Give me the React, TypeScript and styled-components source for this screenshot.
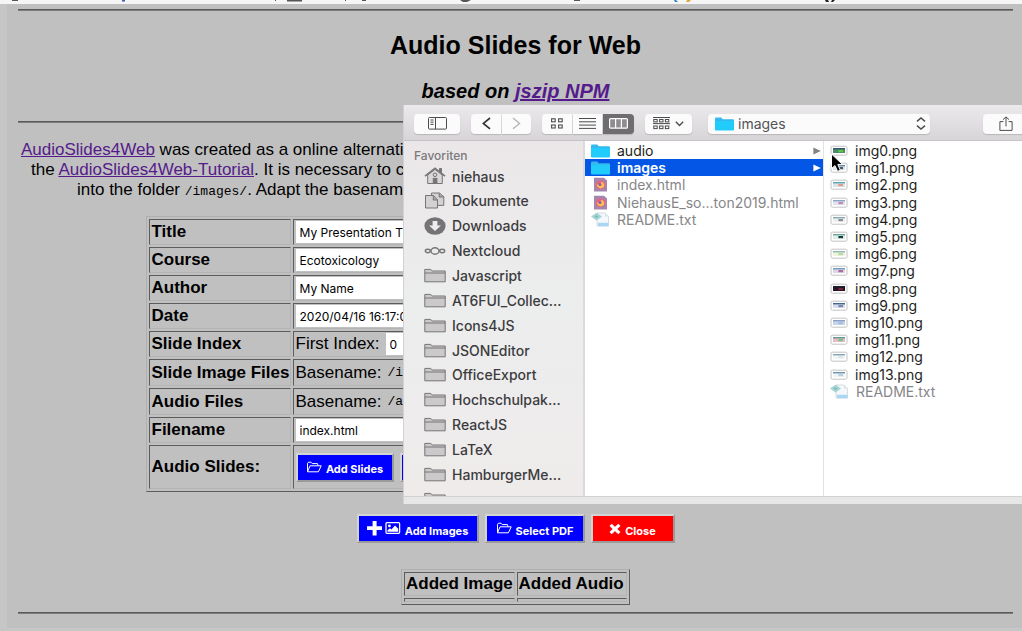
import React from 'react';
import styled, { createGlobalStyle, css } from 'styled-components';

const GlobalStyle = createGlobalStyle`
  * { box-sizing: border-box; }
  html, body { margin: 0; background: #c6c6c6; }
  body { font-family: "Liberation Sans", Arial, sans-serif; font-size: 17px; color: #000; }
  button, input, select { font: inherit; color: inherit; margin: 0; }
`;

const ui = 'Inter, "Noto Sans", sans-serif';

/* ---------- page ---------- */

const Page = styled.div`
  position: relative;
  overflow: hidden;
`;

const BrowserStrip = styled.div`
  height: 4px;
  background: #f6f6f6;
  svg { display: block; }
`;

const Sheet = styled.main`
  margin-left: 7px;
  padding: 5px 9px 14px 11px;
  background: #c0c0c0;
`;

const Rule = styled.hr<{ $gap?: number }>`
  height: 2px;
  margin: ${(p) => p.$gap ?? 0}px 0 0;
  border: 0;
  border-top: 1px solid #5a5a5a;
  border-bottom: 1px solid #7c7c7c;
`;

const Heading = styled.h1`
  margin: 19px 0 0;
  font-size: 25px;
  line-height: 30px;
  text-align: center;
`;

const SubHeading = styled.h2`
  margin: 19px 0 0;
  font-size: 20px;
  line-height: 24px;
  font-style: italic;
  text-align: center;
`;

const Link = styled.a`
  color: #551a8b;
  text-decoration: underline;
`;

const Intro = styled.p`
  margin: 17px 0 16px;
  line-height: 20px;
  white-space: nowrap;
`;

const IntroLine = styled.span<{ $indent: number }>`
  display: block;
  padding-left: ${(p) => p.$indent}px;
`;

const Code = styled.code`
  font-family: "Liberation Mono", monospace;
  font-size: 13px;
  line-height: 1;
`;

const FormTable = styled.table<{ $wide?: boolean }>`
  width: ${(p) => (p.$wide ? '740px' : '229px')};
  margin: 0 auto;
  border: 1px solid;
  border-color: #b0b0b0 #5c5c5c #5c5c5c #b0b0b0;
  border-spacing: 2px;
  table-layout: fixed;
  text-align: left;
`;

const cell = css`
  padding: 1px 2px;
  border: 1px solid;
  border-color: #5c5c5c #b4b4b4 #b4b4b4 #5c5c5c;
  line-height: 20px;
  white-space: nowrap;
`;

const Row = styled.tr<{ $height: number }>`
  height: ${(p) => p.$height}px;
`;

const LabelCell = styled.th<{ $width?: number }>`
  ${cell}
  width: ${(p) => (p.$width ? `${p.$width}px` : 'auto')};
`;

const HeadCell = styled(LabelCell)`
  padding: 1px;
`;

const ValueCell = styled.td`
  ${cell}
`;

const Blank = styled.td`
  ${cell}
  padding: 0;
`;

const TextInput = styled.input`
  display: block;
  width: 300px;
  height: 22px;
  padding: 0 4px;
  border: 0;
  background: #fff;
  font-family: ${ui};
  font-size: 12px;
`;

const Inline = styled.div`
  display: flex;
  align-items: center;
  gap: 6px;
  height: 22px;
`;

const IndexInput = styled(TextInput)`
  width: 36px;
`;

const Actions = styled.div`
  display: flex;
  justify-content: center;
  gap: 6px;
  margin: 22px 0 26px;
`;

const CellActions = styled.div`
  display: flex;
  gap: 6px;
`;

const ActionButton = styled.button<{ $color: string; $width: number }>`
  display: flex;
  align-items: center;
  justify-content: center;
  gap: 4px;
  width: ${(p) => p.$width}px;
  height: 29px;
  padding: 0;
  border: 2px solid;
  border-color: #d4d4d4 #9a9a9a #9a9a9a #d4d4d4;
  background: ${(p) => p.$color};
  color: #fff;
  font-family: ${ui};
  font-size: 11px;
  font-weight: 700;
  line-height: 16px;
  white-space: nowrap;
  span { padding-top: 4px; }
`;

/* ---------- file dialog ---------- */

const Dialog = styled.section`
  position: absolute;
  top: 105px;
  left: 403px;
  right: 0;
  display: flex;
  flex-direction: column;
  overflow: hidden;
  background: #fff;
  border-left: 1px solid #d2d0d2;
  font-family: ${ui};
  font-size: 14px;
  color: #2c2c2e;
`;

const Toolbar = styled.div`
  display: flex;
  align-items: center;
  gap: 11px;
  height: 36px;
  padding: 2px 0 0 10px;
  background: linear-gradient(#ece9ec, #d8d5d8);
  border-bottom: 1px solid #c6c3c6;
`;

const Group = styled.div`
  display: flex;
  gap: 1px;
  flex: none;
`;

const ToolButton = styled.button<{ $width: number; $side?: 'left' | 'mid' | 'right'; $on?: boolean }>`
  display: flex;
  align-items: center;
  justify-content: center;
  gap: 5px;
  flex: none;
  width: ${(p) => p.$width}px;
  height: 20px;
  padding: 0;
  border: 0;
  border-radius: ${(p) =>
    p.$side === 'left' ? '4px 0 0 4px' : p.$side === 'mid' ? '0' : p.$side === 'right' ? '0 4px 4px 0' : '4px'};
  background: ${(p) => (p.$on ? '#6f6d6f' : '#fcfbfc')};
  box-shadow: 0 1px 1px #b9b6b9;
`;

const PathBox = styled.label`
  display: flex;
  align-items: center;
  gap: 4px;
  flex: none;
  width: 222px;
  height: 20px;
  margin: 0 42px 0 5px;
  padding: 0 4px 0 7px;
  border-radius: 4px;
  background: #fcfbfc;
  box-shadow: 0 1px 1px #b9b6b9;
  color: #545456;
  select {
    flex: 1;
    height: 20px;
    padding: 0;
    border: 0;
    background: transparent;
    appearance: none;
  }
`;

const Columns = styled.div`
  display: flex;
  height: 355px;
`;

const Sidebar = styled.nav`
  flex: none;
  width: 181px;
  overflow: hidden;
  background: linear-gradient(#ebe7e9, #eceded 45%, #efebeb);
  border-right: 2px solid #dcdadb;
`;

const SideTitle = styled.h3`
  margin: 6px 0 0 10px;
  font-size: 12px;
  line-height: 17px;
  font-weight: 500;
  color: #7b797b;
`;

const SideList = styled.ul`
  display: grid;
  grid-auto-rows: 1fr;
  height: 348px;
  margin: 0;
  padding: 0;
  list-style: none;
`;

const SideItem = styled.button`
  display: flex;
  align-items: center;
  gap: 6px;
  width: 100%;
  height: 24px;
  padding: 0 0 0 20px;
  border: 0;
  background: none;
  color: #3c3c3e;
  text-align: left;
  font-weight: 500;
  svg { flex: none; }
`;

const FileColumn = styled.div<{ $width?: number }>`
  flex: ${(p) => (p.$width ? 'none' : 1)};
  width: ${(p) => (p.$width ? `${p.$width}px` : 'auto')};
  padding-top: 1px;
  border-right: ${(p) => (p.$width ? '1px solid #e2e2e2' : '0')};
`;

const FileList = styled.ul<{ $height: number }>`
  display: grid;
  grid-auto-rows: 1fr;
  height: ${(p) => p.$height}px;
  margin: 0;
  padding: 0;
  list-style: none;
`;

const FileRow = styled.button<{ $selected?: boolean }>`
  display: flex;
  align-items: center;
  gap: 7px;
  width: 100%;
  height: 17px;
  padding: 0 2px 0 6px;
  border: 0;
  background: ${(p) => (p.$selected ? '#0457e6' : 'none')};
  color: ${(p) => (p.$selected ? '#fff' : '#1e1e20')};
  font-weight: ${(p) => (p.$selected ? 600 : 400)};
  line-height: 17px;
  text-align: left;
  white-space: nowrap;
  &:disabled { color: #868688; }
  svg { flex: none; }
  span { flex: 1; }
`;

const DialogFoot = styled.div`
  height: 8px;
  background: #e7e7e7;
  border-top: 1px solid #d2d2d2;
`;

const Pointer = styled.svg`
  position: absolute;
  top: 153px;
  left: 830px;
`;

/* ---------- icons ---------- */

const OpenFolder = () => (
  <svg width="16" height="13" viewBox="0 0 16 13" fill="none" stroke="#fff" strokeWidth="1" strokeLinejoin="round">
    <path d="M1.5 10.5V2.3L2.5 1.2H5L6.2 2.6H11.5L12 4.6M1.5 10.8L4 4.8H15.2L12.4 10.8Z" />
  </svg>
);

const PlusPicture = () => (
  <svg width="34" height="15" viewBox="0 0 34 15">
    <path d="M5.6 0H9.6V5.2H15V9H9.6V14.4H5.6V9H0V5.2H5.6Z" fill="#fff" />
    <rect x="19" y="1.7" width="13.6" height="10.6" rx="1" fill="none" stroke="#fff" strokeWidth="1.3" />
    <circle cx="22.4" cy="4.9" r="1.4" fill="#fff" />
    <path d="M20.5 10.8V9.2L23 7.2L24.4 8.4L28 4.6L31.2 7.8V10.8Z" fill="#fff" />
  </svg>
);

const Cross = () => (
  <svg width="12" height="12" viewBox="0 0 12 12" stroke="#fff" strokeWidth="3.2">
    <path d="M1.6 1.8L10.4 10.2M10.4 1.8L1.6 10.2" />
  </svg>
);

const BlueFolder = () => (
  <svg width="19" height="14" viewBox="0 0 19 14">
    <path d="M0 2Q0 .6 1.2 .6H6.3L7.6 2.2H17.8Q19 2.2 19 3.2V13H0Z" fill="#35b8ee" />
    <path d="M0 4H19V12.4Q19 13.4 18 13.4H1Q0 13.4 0 12.4Z" fill="#22ccfa" />
  </svg>
);

const GrayFolder = () => (
  <svg width="22" height="15" viewBox="0 0 22 15" stroke="#777577" strokeWidth="1" fill="#cbc9ca">
    <path d="M.8 13.8V1.4H6.8L8.2 3H21.2V13.8Z" />
    <path d="M.8 5H21.2" fill="none" />
  </svg>
);

const Home = () => (
  <svg width="22" height="18" viewBox="0 0 22 18" fill="none" stroke="#777577">
    <path d="M15.5 1.5H17.5V5.6L15.5 4Z" fill="#777577" />
    <path d="M3.7 8V16.5H18.3V8L11 2.4Z" fill="#d9d7d8" />
    <path d="M1 9.2L11 1.2L21 9.2" strokeWidth="1.6" />
    <circle cx="11" cy="7.8" r="1.8" />
    <rect x="9.3" y="11.4" width="3.6" height="4.6" fill="#777577" />
  </svg>
);

const Documents = () => (
  <svg width="22" height="17" viewBox="0 0 22 17" fill="#d3d1d2" stroke="#777577">
    <path d="M7.5 1H15.5L19.8 4.6V13.4H7.5Z" />
    <path d="M15.2 1V5H19.8" fill="#a9a7a8" />
    <path d="M1.5 3.5H9.5L13.5 7.6V16H1.5Z" />
    <path d="M9.3 3.5V8H13.5" fill="#a9a7a8" />
  </svg>
);

const Download = () => (
  <svg width="22" height="18" viewBox="0 0 22 18">
    <ellipse cx="11" cy="9" rx="10.6" ry="8.8" fill="#757375" />
    <path d="M8.6 4H13.4V8.6H17L11 14L5 8.6H8.6Z" fill="#eeecee" />
  </svg>
);

const Cloud = () => (
  <svg width="22" height="12" viewBox="0 0 22 12" fill="none" stroke="#777577" strokeWidth="1.4">
    <ellipse cx="11" cy="6" rx="4" ry="3.2" />
    <ellipse cx="3.8" cy="6" rx="2.5" ry="1.7" />
    <ellipse cx="18.2" cy="6" rx="2.5" ry="1.7" />
  </svg>
);

const HtmlFile = () => (
  <svg width="19" height="15" viewBox="0 0 19 15">
    <path d="M3 .8H13L16 3.4V14.4H3Z" fill="#a585ae" />
    <ellipse cx="9.6" cy="7.8" rx="4.8" ry="4.2" fill="#e9637d" />
    <path d="M5.8 7C8 9 9 5.5 11 5C14.5 7 14 11 9.6 11.4C7 11 5.8 9 5.8 7Z" fill="#ffc24f" />
    <circle cx="9" cy="7.6" r="1.5" fill="#8c5bb0" />
  </svg>
);

const TextFile = () => (
  <svg width="19" height="15" viewBox="0 0 19 15">
    <path d="M6 1H14L17.5 4.4V14H6Z" fill="#f4f8fa" stroke="#c9d4da" strokeWidth=".8" />
    <path d="M14 1V4.4H17.5" fill="#dbe4e8" />
    <path d="M0 4.6L5.5 .8L11 4.6L5.5 8.6Z" fill="#a5d4d3" />
    <path d="M3.4 4.6L5.5 3.2L7.6 4.6L5.5 6Z" fill="#7fb9c2" />
    <path d="M7 10.8H17.5V14.2H7Z" fill="#a9d6f3" />
  </svg>
);

const Thumb = ({ a, b, bg }: { a: string; b: string; bg: string }) => (
  <svg width="18" height="11" viewBox="0 0 18 11">
    <rect x="1" y="1.2" width="16" height="9" rx="1.4" fill="#fff" stroke="#c3c3c3" strokeWidth="1" />
    <rect x="3" y="3" width="12" height="5" fill={bg} />
    <rect x="3" y="3" width="12" height="1.4" fill={a} />
    <rect x="8.4" y="5" width="4.6" height="2.2" fill={b} />
  </svg>
);

const Triangle = ({ color }: { color: string }) => (
  <svg width="8" height="8" viewBox="0 0 8 8">
    <path d="M.4 .6L7.8 4L.4 7.4Z" fill={color} />
  </svg>
);

/* ---------- data ---------- */

const sideItems: [string, () => React.JSX.Element][] = [
  ['niehaus', Home],
  ['Dokumente', Documents],
  ['Downloads', Download],
  ['Nextcloud', Cloud],
  ['Javascript', GrayFolder],
  ['AT6FUI_Collec...', GrayFolder],
  ['Icons4JS', GrayFolder],
  ['JSONEditor', GrayFolder],
  ['OfficeExport', GrayFolder],
  ['Hochschulpak...', GrayFolder],
  ['ReactJS', GrayFolder],
  ['LaTeX', GrayFolder],
  ['HamburgerMe...', GrayFolder],
  ['', GrayFolder],
];

const thumbs = [
  ['#34586a', '#5cc83c', '#4c8a6c'],
  ['#6d8496', '#43586c', '#dfe4e8'],
  ['#5ba3b5', '#e39a8e', '#d9e4e8'],
  ['#8aa5c6', '#c48bb0', '#dfe3ef'],
  ['#8aaab8', '#8f8f94', '#eeeeee'],
  ['#6aa39c', '#173a4c', '#dff0e2'],
  ['#8db6b0', '#b9d7a8', '#edf3dc'],
  ['#6f9fc0', '#b06a9c', '#dcd5e8'],
  ['#20202c', '#7a2236', '#22182a'],
  ['#44688c', '#7c88b4', '#d5dcea'],
  ['#8aa0c6', '#a9bedf', '#c7d5ec'],
  ['#5d9a9a', '#7fbf8c', '#e5bcc4'],
  ['#7fa6b4', '#d7e6ea', '#f2f6f7'],
  ['#6f92ac', '#b9cfe0', '#eef3f6'],
];

const fields = [
  ['Title', 'My Presentation Title'],
  ['Course', 'Ecotoxicology'],
  ['Author', 'My Name'],
  ['Date', '2020/04/16 16:17:00'],
];

const FieldRow = ({ label, value }: { label: string; value: string }) => (
  <Row $height={26}>
    <LabelCell $width={142} scope="row"><label htmlFor={label}>{label}</label></LabelCell>
    <ValueCell><TextInput id={label} defaultValue={value} /></ValueCell>
  </Row>
);

const FileDialog = () => (
  <Dialog aria-label="images">
    <Toolbar>
      <ToolButton $width={46} aria-label="Sidebar">
        <svg width="19" height="13" viewBox="0 0 19 13" fill="none" stroke="#4c4c4e">
          <rect x=".5" y=".5" width="18" height="11.6" rx="1" />
          <path d="M7.5 .5V12M2.4 3H5.6M2.4 5.2H5.6M2.4 7.4H5.6" />
        </svg>
      </ToolButton>
      <Group>
        <ToolButton $width={30} $side="left" aria-label="Back">
          <svg width="9" height="13" viewBox="0 0 9 13" fill="none" stroke="#343436" strokeWidth="1.7"><path d="M8 1L1.4 6.4L8 11.8" /></svg>
        </ToolButton>
        <ToolButton $width={29} $side="right" aria-label="Forward">
          <svg width="9" height="13" viewBox="0 0 9 13" fill="none" stroke="#b4b2b4" strokeWidth="1.3"><path d="M1 1L7.6 6.4L1 11.8" /></svg>
        </ToolButton>
      </Group>
      <Group>
        <ToolButton $width={30} $side="left" aria-label="Icons">
          <svg width="12" height="11" viewBox="0 0 12 11" fill="none" stroke="#4c4c4e" strokeWidth="1.1">
            <rect x=".6" y=".8" width="3.6" height="3" /><rect x="7.6" y=".8" width="3.6" height="3" />
            <rect x=".6" y="7" width="3.6" height="3" /><rect x="7.6" y="7" width="3.6" height="3" />
          </svg>
        </ToolButton>
        <ToolButton $width={29} $side="mid" aria-label="List">
          <svg width="17" height="11" viewBox="0 0 17 11" stroke="#4c4c4e"><path d="M0 .5H17M0 3.8H17M0 7.1H17M0 10.4H17" /></svg>
        </ToolButton>
        <ToolButton $width={31} $side="right" $on aria-label="Columns">
          <svg width="19" height="11" viewBox="0 0 19 11" fill="#8f8d8f" stroke="#fff" strokeWidth="1.2">
            <rect x=".6" y=".6" width="17.8" height="9.6" rx="1" /><path d="M6.6 .6V10M12.4 .6V10" />
          </svg>
        </ToolButton>
      </Group>
      <ToolButton $width={47} aria-label="Arrange">
        <svg width="17" height="13" viewBox="0 0 17 13" fill="none" stroke="#4c4c4e">
          <path d="M0 .5H17M0 6.6H17" />
          <rect x=".8" y="2.5" width="3.4" height="2.4" /><rect x="6.6" y="2.5" width="3.4" height="2.4" /><rect x="12.4" y="2.5" width="3.4" height="2.4" />
          <rect x=".8" y="9" width="3.4" height="2.6" /><rect x="6.6" y="9" width="3.4" height="2.6" /><rect x="12.4" y="9" width="3.4" height="2.6" />
        </svg>
        <svg width="9" height="6" viewBox="0 0 9 6" fill="none" stroke="#4c4c4e" strokeWidth="1.4"><path d="M.8 .8L4.5 4.4L8.2 .8" /></svg>
      </ToolButton>
      <PathBox>
        <BlueFolder />
        <select aria-label="Folder" defaultValue="images"><option>images</option></select>
        <svg width="10" height="13" viewBox="0 0 10 13" fill="none" stroke="#4c4c4e" strokeWidth="1.4"><path d="M1 4.4L5 1L9 4.4M1 8.6L5 12L9 8.6" /></svg>
      </PathBox>
      <ToolButton $width={46} aria-label="Share">
        <svg width="14" height="16" viewBox="0 0 14 16" fill="none" stroke="#4c4c4e">
          <path d="M4.4 5.6H.9V14.4H13.1V5.6H9.6M7 10.4V1M4 3.6L7 .9L10 3.6" />
        </svg>
      </ToolButton>
    </Toolbar>
    <Columns>
      <Sidebar>
        <SideTitle>Favoriten</SideTitle>
        <SideList>
          {sideItems.map(([name, Icon], i) => (
            <li key={i}><SideItem><Icon />{name}</SideItem></li>
          ))}
        </SideList>
      </Sidebar>
      <FileColumn $width={239}>
        <FileList $height={86}>
          <li><FileRow><BlueFolder /><span>audio</span><Triangle color="#838385" /></FileRow></li>
          <li><FileRow $selected><BlueFolder /><span>images</span><Triangle color="#fff" /></FileRow></li>
          <li><FileRow disabled><HtmlFile /><span>index.html</span></FileRow></li>
          <li><FileRow disabled><HtmlFile /><span>NiehausE_so...ton2019.html</span></FileRow></li>
          <li><FileRow disabled><TextFile /><span>README.txt</span></FileRow></li>
        </FileList>
      </FileColumn>
      <FileColumn>
        <FileList $height={258}>
          {thumbs.map(([a, b, bg], i) => (
            <li key={i}><FileRow><Thumb a={a} b={b} bg={bg} /><span>img{i}.png</span></FileRow></li>
          ))}
          <li><FileRow disabled><TextFile /><span>README.txt</span></FileRow></li>
        </FileList>
      </FileColumn>
    </Columns>
    <DialogFoot />
  </Dialog>
);

export default function App() {
  return (
    <Page>
      <GlobalStyle />
      <BrowserStrip>
        <svg width="1022" height="4" viewBox="0 0 1022 4">
          <path d="M12 0H18V1H12ZM287 0H302V1.4H287ZM275 0H276V1H275ZM345 0H346V1H345ZM362 0H366V1H362ZM460 0H471L467 2H463ZM574 0H580V1H574Z" fill="#555" />
          <path d="M122 0H125V1.6H122Z" fill="#4a5fb8" />
          <path d="M674 0H676L678 2H675Z" fill="#2c83b8" />
          <path d="M687 0H691L689 2H686Z" fill="#d8a93c" />
          <path d="M825 0H828L829 2H826ZM832 0H835L833 2H831Z" fill="#222" />
        </svg>
      </BrowserStrip>
      <Sheet>
        <Rule />
        <Heading>Audio Slides for Web</Heading>
        <SubHeading>based on <Link href="#jszip">jszip NPM</Link></SubHeading>
        <Rule $gap={18} />
        <Intro>
          <IntroLine $indent={3}><Link href="#app">AudioSlides4Web</Link> was created as a online alternati</IntroLine>
          <IntroLine $indent={13}>the <Link href="#tutorial">AudioSlides4Web-Tutorial</Link>. It is necessary to co</IntroLine>
          <IntroLine $indent={59}>into the folder <Code>/images/</Code>. Adapt the basenam</IntroLine>
        </Intro>
        <FormTable $wide>
          <tbody>
            {fields.map(([label, value]) => <FieldRow key={label} label={label} value={value} />)}
            <Row $height={26}>
              <LabelCell scope="row">Slide Index</LabelCell>
              <ValueCell><Inline><label htmlFor="first">First Index:</label><IndexInput id="first" defaultValue="0" /></Inline></ValueCell>
            </Row>
            <Row $height={27}>
              <LabelCell scope="row">Slide Image Files</LabelCell>
              <ValueCell><Inline>Basename: <Code>/img</Code></Inline></ValueCell>
            </Row>
            <Row $height={27}>
              <LabelCell scope="row">Audio Files</LabelCell>
              <ValueCell><Inline>Basename: <Code>/audio</Code></Inline></ValueCell>
            </Row>
            <FieldRow label="Filename" value="index.html" />
            <Row $height={44}>
              <LabelCell scope="row">Audio Slides:</LabelCell>
              <ValueCell>
                <CellActions>
                  <ActionButton $color="#0000ff" $width={98}><OpenFolder /><span>Add Slides</span></ActionButton>
                  <ActionButton $color="#0000ff" $width={98} aria-label="Load"><OpenFolder /></ActionButton>
                </CellActions>
              </ValueCell>
            </Row>
          </tbody>
        </FormTable>
        <Actions>
          <ActionButton $color="#0000ff" $width={122}><PlusPicture /><span>Add Images</span></ActionButton>
          <ActionButton $color="#0000ff" $width={100}><OpenFolder /><span>Select PDF</span></ActionButton>
          <ActionButton $color="#ff0000" $width={84}><Cross /><span>Close</span></ActionButton>
        </Actions>
        <FormTable>
          <thead>
            <Row $height={24}><HeadCell scope="col">Added Image</HeadCell><HeadCell scope="col">Added Audio</HeadCell></Row>
          </thead>
          <tbody>
            <Row $height={4}><Blank /><Blank /></Row>
          </tbody>
        </FormTable>
        <Rule $gap={7} />
      </Sheet>
      <FileDialog />
      <Pointer width="16" height="20" viewBox="0 0 16 20">
        <path d="M1.5 1V15.5L5 12.6L7.6 18.4L10.4 17.2L7.8 11.6H12.6Z" fill="#000" stroke="#fff" strokeWidth="1" />
      </Pointer>
    </Page>
  );
}
